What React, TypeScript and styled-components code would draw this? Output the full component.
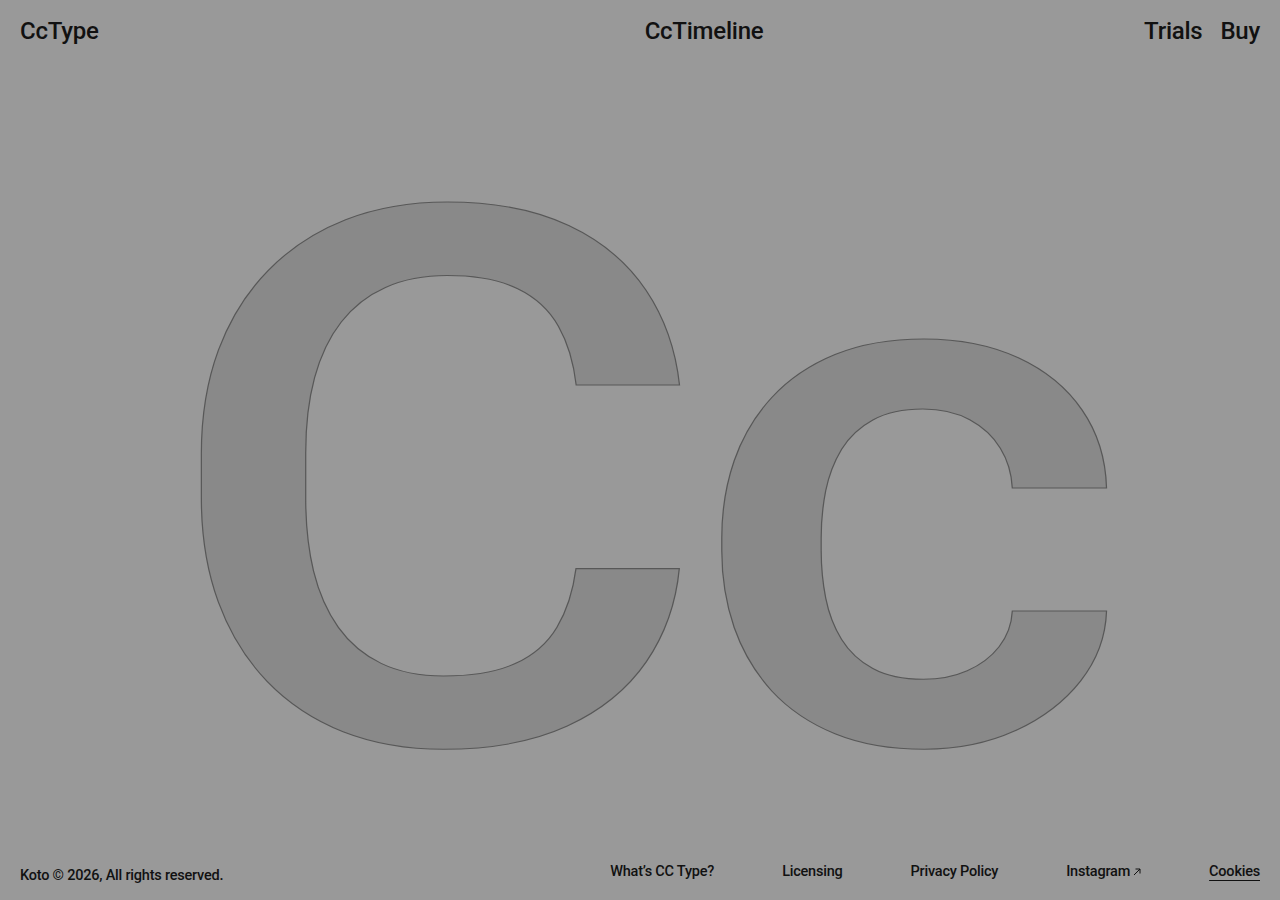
import React from 'react';
import styled, { createGlobalStyle } from 'styled-components';

const GlobalStyle = createGlobalStyle`
  html, body {
    margin: 0;
    padding: 0;
    background: #999999;
  }
  body {
    font-family: 'Roboto', 'Liberation Sans', sans-serif;
    color: #111111;
  }
`;

const Page = styled.div`
  display: flex;
  flex-direction: column;
  height: 100vh;
  overflow: hidden;
`;

const Header = styled.header`
  display: grid;
  grid-template-columns: 1fr auto 1fr;
  align-items: center;
  padding: 17px 20px 0;
  font-size: 24px;
  font-weight: 500;
  letter-spacing: -0.01em;
  line-height: 28px;
`;

const Brand = styled.a`
  justify-self: start;
  color: inherit;
  text-decoration: none;
`;

const Center = styled.a`
  justify-self: center;
  color: inherit;
  text-decoration: none;
  margin-left: 128px;
`;

const Nav = styled.nav`
  justify-self: end;
  display: flex;
  gap: 18px;
`;

const NavLink = styled.a`
  color: inherit;
  text-decoration: none;
`;

const Stage = styled.main`
  flex: 1;
  display: flex;
  align-items: center;
  justify-content: center;
  padding-top: 64px;
`;

const Glyphs = styled.div`
  font-family: 'Roboto', sans-serif;
  font-weight: 500;
  font-size: 749px;
  line-height: 1;
  letter-spacing: -20px;
  color: #898989;
  -webkit-text-stroke: 1.1px #585858;
  transform: scaleX(1.13);
  margin-left: -12px;
  user-select: none;
`;

const Footer = styled.footer`
  display: flex;
  justify-content: space-between;
  align-items: flex-end;
  padding: 0 20px 20px;
  font-size: 14.5px;
  font-weight: 500;
  letter-spacing: -0.015em;
`;

const Copy = styled.span`
  transform: translateY(4px);
`;

const Links = styled.nav`
  display: flex;
  gap: 68px;
`;

const FootLink = styled.a<{ $underline?: boolean }>`
  color: inherit;
  text-decoration: ${(p) => (p.$underline ? 'underline' : 'none')};
  text-underline-offset: 4px;
  text-decoration-thickness: 1px;
  display: inline-flex;
  align-items: center;
  gap: 3px;
`;

const Arrow = () => (
  <svg width="8" height="8" viewBox="0 0 8 8" fill="none" stroke="#111" strokeWidth="1">
    <path d="M1 7 L7 1 M2.5 1 H7 V5.5" />
  </svg>
);

export default function App() {
  return (
    <>
      <GlobalStyle />
      <Page>
        <Header>
          <Brand href="#">CcType</Brand>
          <Center href="#">CcTimeline</Center>
          <Nav>
            <NavLink href="#">Trials</NavLink>
            <NavLink href="#">Buy</NavLink>
          </Nav>
        </Header>
        <Stage>
          <Glyphs>Cc</Glyphs>
        </Stage>
        <Footer>
          <Copy>Koto © 2026, All rights reserved.</Copy>
          <Links>
            <FootLink href="#">What’s CC Type?</FootLink>
            <FootLink href="#">Licensing</FootLink>
            <FootLink href="#">Privacy Policy</FootLink>
            <FootLink href="#">
              Instagram <Arrow />
            </FootLink>
            <FootLink href="#" $underline>
              Cookies
            </FootLink>
          </Links>
        </Footer>
      </Page>
    </>
  );
}
